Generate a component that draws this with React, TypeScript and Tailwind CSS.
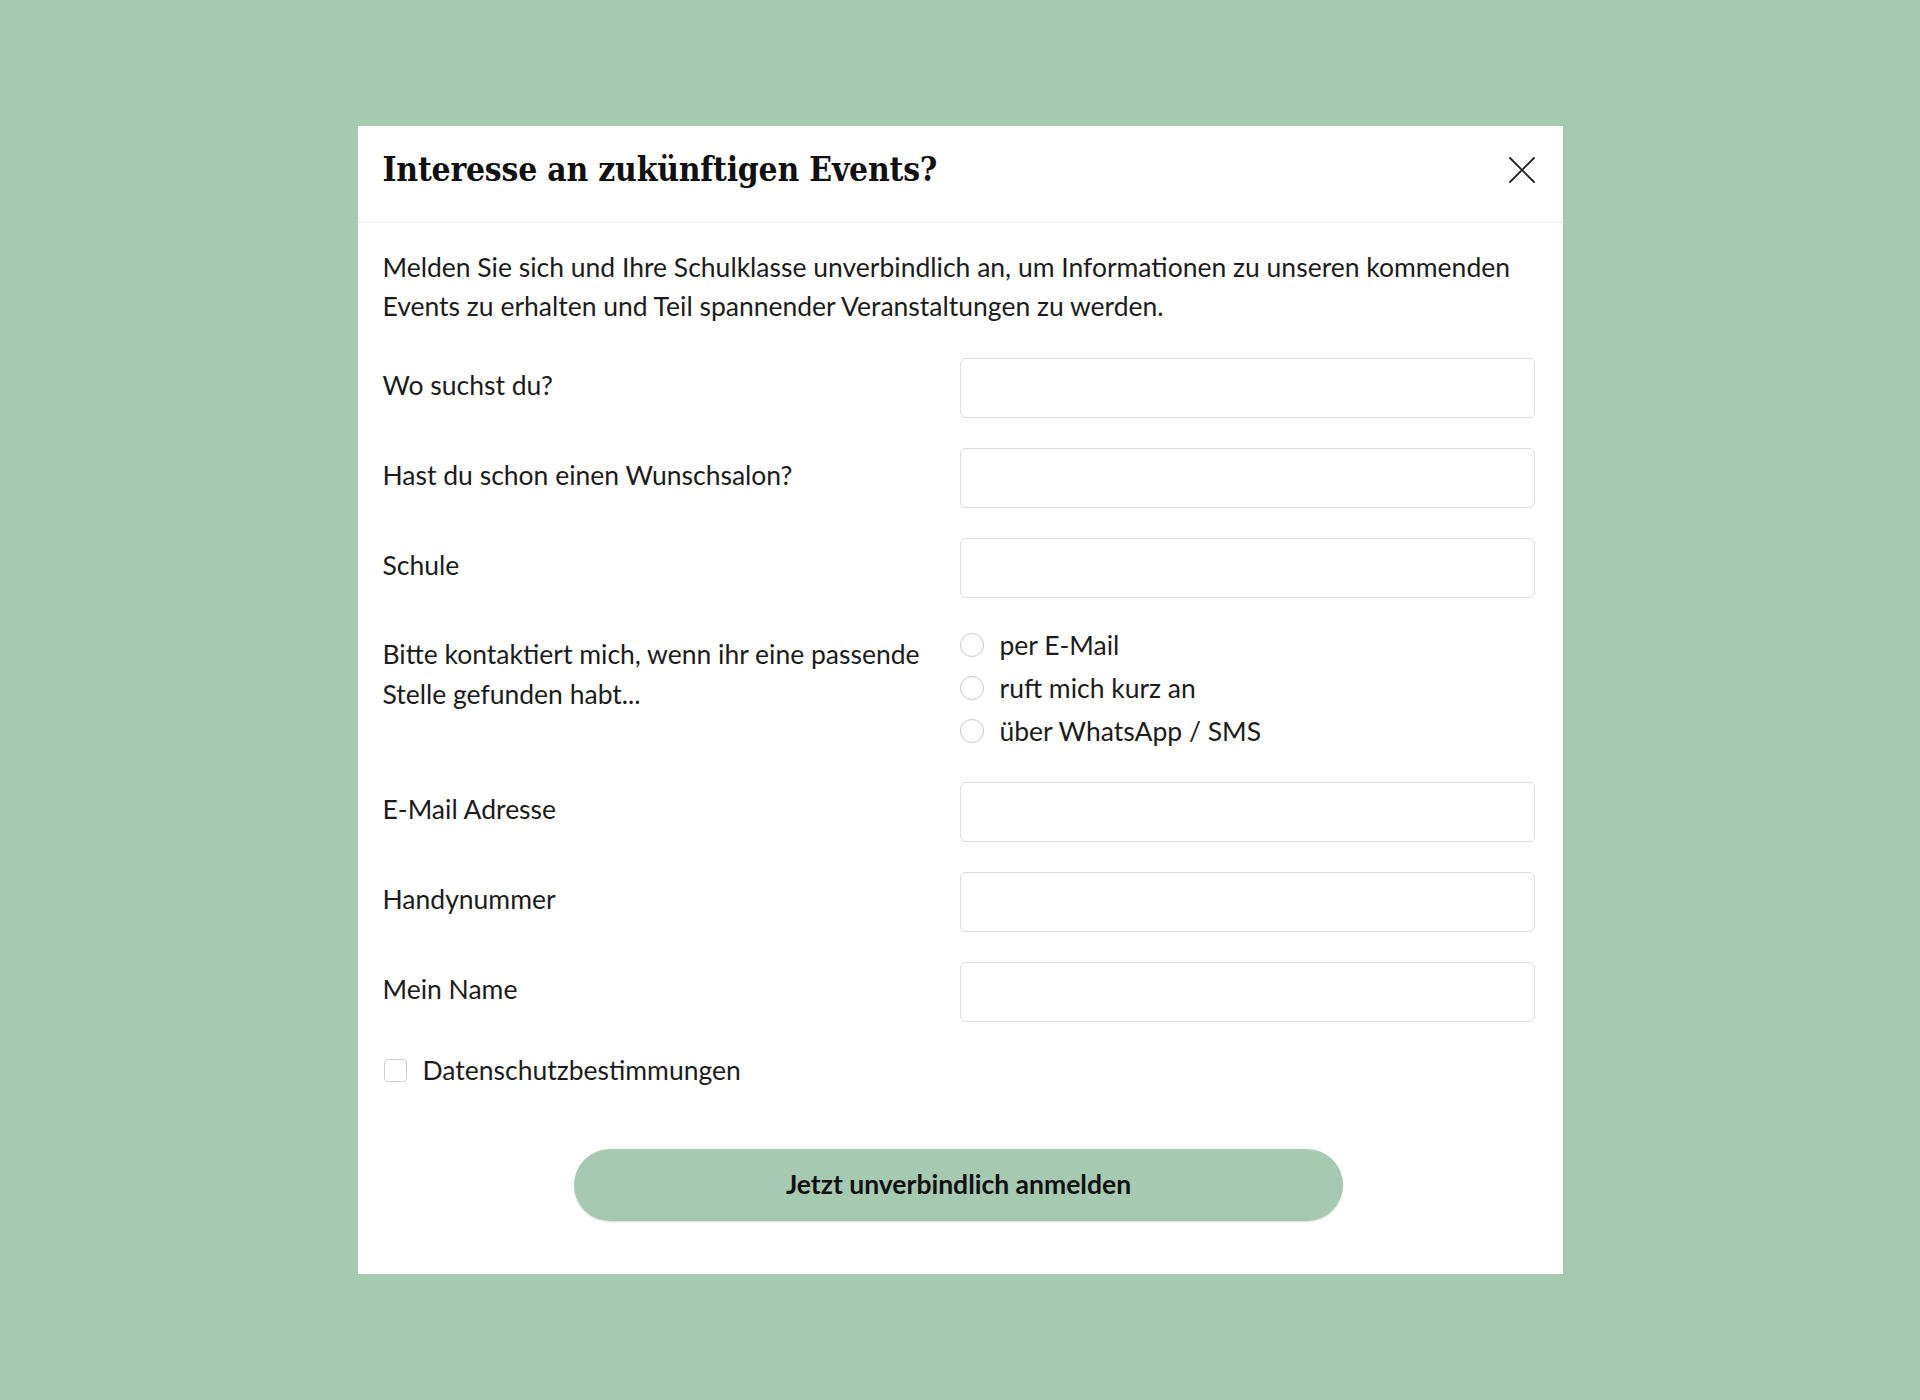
import React from "react";

const sans = { fontFamily: "Lato, 'Open Sans', sans-serif" };

function Field({ label }: { label: string }) {
  return (
    <div className="flex items-start">
      <div className="w-[577px] shrink-0 pt-[7px] text-[26.5px] leading-[40px] text-[#1c1c1c]">{label}</div>
      <input
        type="text"
        className="h-[60px] flex-1 rounded-[6px] border border-[#dcdcdc] bg-white px-3 outline-none"
      />
    </div>
  );
}

function Radio({ label }: { label: string }) {
  return (
    <label className="flex h-[43px] items-center">
      <span className="h-[24px] w-[24px] shrink-0 rounded-full border border-[#c9c9c9] bg-white" />
      <span className="ml-[16px] text-[26.5px] leading-[40px] text-[#1c1c1c]">{label}</span>
    </label>
  );
}

export default function App() {
  return (
    <div className="flex min-h-[1400px] justify-center bg-[#a6c9b2] pt-[126px]" style={sans}>
      <div className="h-[1148px] w-[1205px] bg-white">
        <div className="flex h-[97px] items-center justify-between border-b border-[#ececec] pb-[8px] pl-[25px] pr-[28px]">
          <h1
            className="text-[33.3px] font-bold leading-none tracking-[-0.2px] text-[#111] [font-stretch:condensed]"
            style={{ fontFamily: "'DejaVu Serif', serif" }}
          >
            Interesse an zukünftigen Events?
          </h1>
          <button className="mr-[-2px] flex h-[30px] w-[30px] items-center justify-center">
            <svg width="28" height="28" viewBox="0 0 28 28" fill="none">
              <path d="M2 2 L26 26 M26 2 L2 26" stroke="#222" strokeWidth="1.8" strokeLinecap="round" />
            </svg>
          </button>
        </div>
        <div className="pl-[25px] pr-[28px] pt-[25px] pb-[51px]">
          <p className="text-[26.5px] leading-[39px] text-[#1c1c1c]">
            Melden Sie sich und Ihre Schulklasse unverbindlich an, um Informationen zu unseren kommenden Events zu
            erhalten und Teil spannender Veranstaltungen zu werden.
          </p>
          <div className="mt-[32px] flex flex-col gap-[30px]">
            <Field label="Wo suchst du?" />
            <Field label="Hast du schon einen Wunschsalon?" />
            <Field label="Schule" />
          </div>
          <div className="mt-[25px] flex items-start">
            <div className="w-[577px] shrink-0 pt-[11px] text-[26.5px] leading-[40px] text-[#1c1c1c]">
              Bitte kontaktiert mich, wenn ihr eine passende
              <br />
              Stelle gefunden habt...
            </div>
            <div className="flex flex-col">
              <Radio label="per E-Mail" />
              <Radio label="ruft mich kurz an" />
              <Radio label="über WhatsApp / SMS" />
            </div>
          </div>
          <div className="mt-[30px] flex flex-col gap-[30px]">
            <Field label="E-Mail Adresse" />
            <Field label="Handynummer" />
            <Field label="Mein Name" />
          </div>
          <label className="mt-[28px] flex h-[40px] items-center">
            <span className="ml-[1px] h-[23px] w-[23px] shrink-0 rounded-[4px] border border-[#cfcfcf] bg-white" />
            <span className="ml-[16px] text-[26.5px] leading-[40px] text-[#1c1c1c]">Datenschutzbestimmungen</span>
          </label>
          <div className="mt-[59px] flex justify-center">
            <button className="h-[72px] w-[769px] rounded-full bg-[#a6c9b2] text-[26.5px] font-bold text-[#111] shadow-[0_1px_2px_rgba(0,0,0,0.15)]">
              Jetzt unverbindlich anmelden
            </button>
          </div>
        </div>
      </div>
    </div>
  );
}
